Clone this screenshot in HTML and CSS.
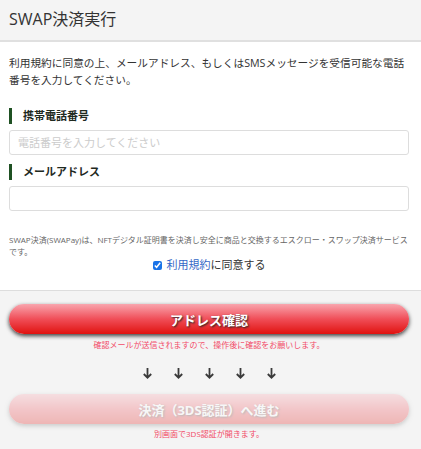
FILE: index.html
```html
<!DOCTYPE html>
<html lang="ja">
<head>
  <meta charset="UTF-8">
  <meta name="viewport" content="width=device-width, initial-scale=1">
  <title>SWAP決済実行</title>
  <link rel="stylesheet" href="styles.css">
</head>
<body>
  <header class="page-head">SWAP決済実行</header>

  <section class="form-area">
    <p class="lead">利用規約に同意の上、メールアドレス、もしくはSMSメッセージを受信可能な電話番号を入力してください。</p>

    <label class="field-label" for="tel">携帯電話番号</label>
    <input class="field" type="text" id="tel" placeholder="電話番号を入力してください">

    <label class="field-label" for="mail">メールアドレス</label>
    <input class="field" type="text" id="mail">

    <p class="note">SWAP決済(SWAPay)は、NFTデジタル証明書を決済し安全に商品と交換するエスクロー・スワップ決済サービスです。</p>
    <div class="agree">
      <input type="checkbox" id="agree" checked>
      <label for="agree"><a href="#" class="terms">利用規約</a>に同意する</label>
    </div>
  </section>

  <section class="action-area">
    <button class="btn-pill">アドレス確認</button>
    <p class="hint">確認メールが送信されますので、操作後に確認をお願いします。</p>
    <div class="arrows">
      <svg viewBox="0 0 9 11"><path d="M4.5 0v9.5M0.8 6l3.7 3.7L8.2 6"/></svg>
      <svg viewBox="0 0 9 11"><path d="M4.5 0v9.5M0.8 6l3.7 3.7L8.2 6"/></svg>
      <svg viewBox="0 0 9 11"><path d="M4.5 0v9.5M0.8 6l3.7 3.7L8.2 6"/></svg>
      <svg viewBox="0 0 9 11"><path d="M4.5 0v9.5M0.8 6l3.7 3.7L8.2 6"/></svg>
      <svg viewBox="0 0 9 11"><path d="M4.5 0v9.5M0.8 6l3.7 3.7L8.2 6"/></svg>
    </div>
    <button class="btn-pill btn-disabled" disabled>決済（3DS認証）へ進む</button>
    <p class="hint hint-last">別画面で3DS認証が開きます。</p>
  </section>
</body>
</html>
```

FILE: styles.css
```css
html {font-family: "Open Sans", "Noto Sans CJK JP", sans-serif; color: #333;}
body {margin: 0; background: #f4f4f4;}

.page-head {
	height: 40px;
	line-height: 38px;
	padding: 0 9px;
	font-size: 16px;
	background: #f4f4f4;
	border-bottom: 2px solid #e0e0e0;
}

.form-area {
	background: #fff;
	padding: 13px 12px 18px 9px;
	border-bottom: 1px solid #ddd;
}

.lead {
	margin: 0;
	font-size: 10.7px;
	line-height: 17px;
}

.field-label {
	display: block;
	margin-top: 19px;
	height: 16px;
	line-height: 16px;
	padding-left: 11px;
	border-left: 3px solid #1f5123;
	font-size: 11px;
	font-weight: bold;
	color: #1f2a1f;
}

.field {
	display: block;
	box-sizing: border-box;
	width: 100%;
	height: 25px;
	margin-top: 6px;
	padding: 0 8px;
	border: 1px solid #ddd;
	border-radius: 3px;
	font-family: inherit;
	font-size: 11px;
	&::placeholder {
		color: #ccc;
	}
}

.field + .field-label {margin-top: 9px;}

.note {
	margin: 23px 0 0;
	font-size: 8px;
	line-height: 12px;
	color: #666;
}

.agree {
	display: flex;
	justify-content: center;
	align-items: center;
	height: 14px;
	font-size: 11px;
	line-height: 14px;
	input {
		width: 9px;
		height: 9px;
		margin: 0 5px 0 0;
		accent-color: #1a73e8;
	}
}

.terms {color: #3567c6; text-decoration: none;}

.action-area {
	padding: 13px 12px 20px 9px;
	text-align: center;
}

.btn-pill {
	display: block;
	width: 100%;
	height: 30px;
	border: 0;
	border-radius: 15px;
	background: linear-gradient(#f9a5ae, #f04e58 50%, #e0120f);
	box-shadow: 0 2px 4px rgba(0, 0, 0, .75);
	color: #fff;
	font-family: inherit;
	font-size: 13px;
	font-weight: bold;
	text-shadow: 1px 1px 2px #222;
	cursor: pointer;
}

.btn-disabled {
	opacity: .27;
	box-shadow: 0 2px 4px rgba(0, 0, 0, .6);
	cursor: default;
}

.hint {
	margin: 5px 0 0;
	font-size: 8px;
	line-height: 12px;
	color: #f24b68;
}

.hint-last {margin-top: 4px;}

.arrows {
	display: flex;
	justify-content: center;
	align-items: center;
	gap: 22px;
	height: 16px;
	margin: 14px 0 13px;
	svg {
		width: 9px;
		height: 11px;
		fill: none;
		stroke: #3a3a3a;
		stroke-width: 1.8;
	}
}
```
